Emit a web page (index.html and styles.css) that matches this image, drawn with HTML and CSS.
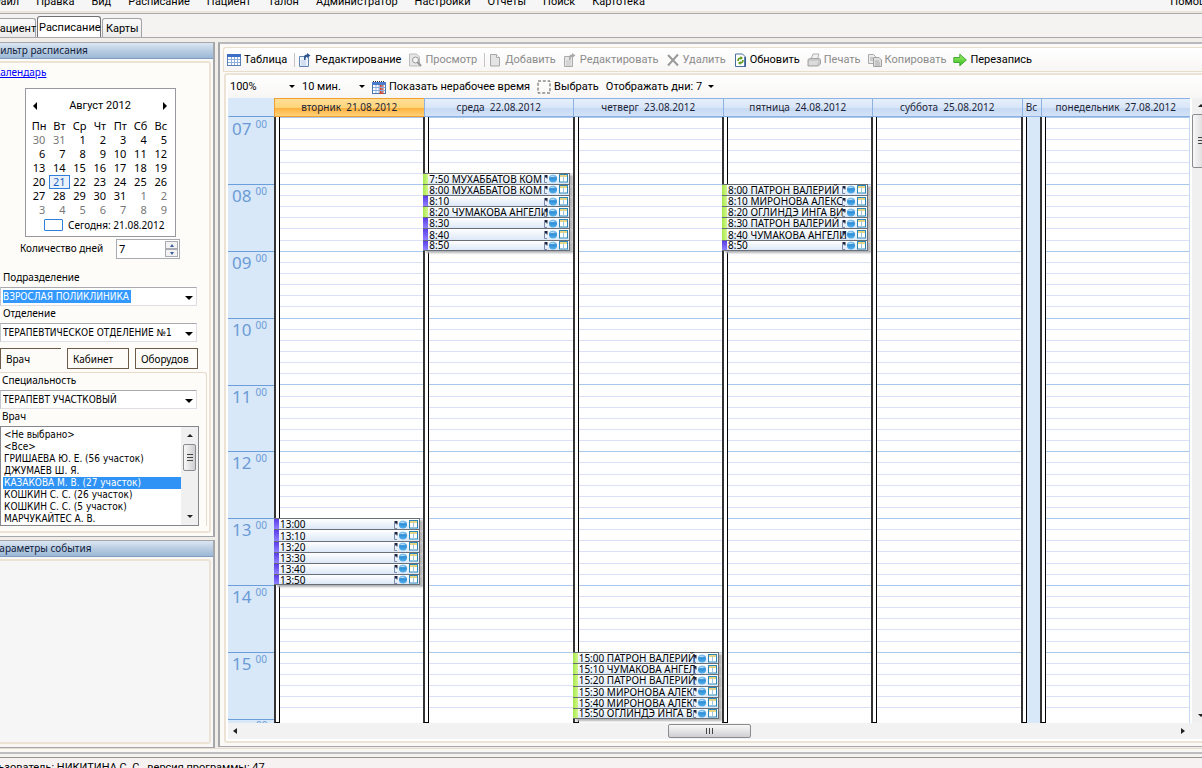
FILE: index.html
```html
<!DOCTYPE html>
<html lang="ru">
<head>
<meta charset="utf-8">
<title>Расписание</title>
<link rel="stylesheet" href="styles.css">
</head>
<body>
<svg class="defs" aria-hidden="true">
  <defs>
    <linearGradient id="blueball" x1="0" y1="0" x2="0" y2="1"><stop offset="0" stop-color="#9fd0f2"/><stop offset=".45" stop-color="#2f8fd8"/><stop offset="1" stop-color="#56b0ea"/></linearGradient>
    <linearGradient id="greenarrow" x1="0" y1="0" x2="0" y2="1"><stop offset="0" stop-color="#a6ee70"/><stop offset="1" stop-color="#2fc01c"/></linearGradient>
    <symbol id="ev-icons" viewBox="0 0 24 9">
      <path d="M0.500 1h3v3.500h-1v-1h-2z" fill="#1c2340"/><path d="M0.500 3v5.500h2.500" stroke="#7d8aa8" fill="none"/>
      <circle cx="9" cy="4.500" r="4" fill="url(#blueball)"/><path d="M6.500 2.500h4" stroke="#b5dcf5"/>
      <rect x="15.500" y=".5" width="8" height="7.500" fill="#fff" stroke="#2b86b8"/><path d="M16 2h7" stroke="#e3c95a" stroke-width="1.500"/><path d="M19.500 2.500v5" stroke="#9cc6dd"/>
    </symbol>
    <symbol id="i-table" viewBox="0 0 14 14">
      <rect x=".5" y="1.500" width="13" height="11" fill="#fff" stroke="#5b7fb8"/><path d="M0 1h14v3H0z" fill="#3c6fc4"/><path d="M1 6.500h12M1 9.500h12M4.500 4v8M7.500 4v8M10.500 4v8" stroke="#8fb0dd"/>
    </symbol>
    <symbol id="i-edit" viewBox="0 0 14 14">
      <path d="M1.500 3.500h9v10h-9z" fill="#edf3fb" stroke="#6484b0"/><path d="M3 8h5M3 10h5M3 12h5" stroke="#b9cbe4"/><path d="M6 7V4q0-2.500 3-2.500V0l3.500 2.500L9 5V3.700q-1.500 0-1.500 3.300z" fill="#2f568f"/>
    </symbol>
    <symbol id="i-editg" viewBox="0 0 14 14">
      <path d="M1.500 3.500h8v10h-8z" fill="#e6e6e6" stroke="#aaa"/><path d="M3 8h5M3 10h5M3 12h5" stroke="#c4c4c4"/><path d="M6 7V4q0-2.500 3-2.500V0l3.500 2.500L9 5V3.700q-1.500 0-1.500 3.300z" fill="#aaa"/>
    </symbol>
    <symbol id="i-view" viewBox="0 0 14 14">
      <path d="M1.500 1h7l3 3v9h-10z" fill="#e6e6e6" stroke="#bbb"/><circle cx="7.500" cy="7" r="3" fill="#f4f4f4" stroke="#999"/><path d="M9.500 9l3.500 4" stroke="#999" stroke-width="2"/>
    </symbol>
    <symbol id="i-add" viewBox="0 0 14 14">
      <path d="M2.500 1.500h6l3 3v8.500h-9z" fill="#e4e4e4" stroke="#a8a8a8"/><path d="M8.500 1.500v3h3" fill="#fff" stroke="#a8a8a8"/>
    </symbol>
    <symbol id="i-del" viewBox="0 0 14 14"><path d="M2 2l10 10.500M12 1.500L2 12.500" stroke="#9b9b9b" stroke-width="2"/></symbol>
    <symbol id="i-refresh" viewBox="0 0 14 14">
      <path d="M2.500 1h7l3 3v9.500h-10z" fill="#fff" stroke="#4a6d9e"/><path d="M12 4v9.500" stroke="#2f568f" stroke-width="1.500"/><path d="M5 8q0-3 3-3M10 7q0 3-3 3" fill="none" stroke="#5b9a16" stroke-width="1.500"/><path d="M7.500 3l2.500 2-2.500 2zM7.500 8L5 10l2.500 2z" fill="#5b9a16"/>
    </symbol>
    <symbol id="i-print" viewBox="0 0 14 14">
      <path d="M4 6l2-5h6l-1.500 5z" fill="#f1f1f1" stroke="#b0b0b0"/><path d="M1 6.500l2-1h9l1.500 1V11L11 13H1z" fill="#c9c9c9" stroke="#a5a5a5"/><path d="M2 9h9M2 11h8" stroke="#eee"/>
    </symbol>
    <symbol id="i-copy" viewBox="0 0 14 14">
      <path d="M.5 1.500h5l2 2v7h-7z" fill="#ececec" stroke="#aaa"/><path d="M5.500 4.500h5.500l2.500 2.500v6.500h-8z" fill="#e0e0e0" stroke="#a0a0a0"/><path d="M7 8h4M7 10h5M7 12h5M2 5h3M2 7h3" stroke="#aaa"/>
    </symbol>
    <symbol id="i-arrow" viewBox="0 0 14 14"><path d="M.8 4.500h6V1.200L13.400 7l-6.600 5.800V9.500h-6z" fill="url(#greenarrow)" stroke="#4aa53a"/></symbol>
    <symbol id="i-time" viewBox="0 0 14 14">
      <rect x=".5" y="2.500" width="13" height="11" fill="#fff" stroke="#4d74b0"/><path d="M0 2h14v3H0z" fill="#4a7cca"/><path d="M1 1.500h12" stroke="#333" stroke-dasharray="1 1"/><path d="M7.500 5h4v9h-4z" fill="#d9442a"/><path d="M1 7.500h12M1 10.500h12M4 5v8M7 5v8M10 5v8" stroke="#8badde"/>
    </symbol>
    <symbol id="i-select" viewBox="0 0 14 14"><rect x="1" y="1" width="12" height="12" fill="none" stroke="#555" stroke-dasharray="3 1.800"/></symbol>
  </defs>
</svg>
<div class="app">
  <nav class="menu">
    <a href="#">Файл</a><a href="#">Правка</a><a href="#">Вид</a><a href="#">Расписание</a><a href="#">Пациент</a><a href="#">Талон</a><a href="#">Администратор</a><a href="#">Настройки</a><a href="#">Отчеты</a><a href="#">Поиск</a><a href="#">Картотека</a><a href="#" class="help">Помощь</a>
  </nav>
  <div class="tabs">
    <button class="tab">Пациент</button><button class="tab current">Расписание</button><button class="tab">Карты</button>
  </div>
  <main class="main">
    <aside class="side">
      <section class="pane">
        <h2 class="pane-title">Фильтр расписания</h2>
        <div class="pane-body filter">
          <a class="callink" href="#">Календарь</a>
          <div class="calendar">
            <div class="cal-head"><button class="prev" aria-label="Назад"></button><span>Август 2012</span><button class="next" aria-label="Вперёд"></button></div>
            <table class="cal-days">
              <thead><tr><th>Пн</th><th>Вт</th><th>Ср</th><th>Чт</th><th>Пт</th><th>Сб</th><th>Вс</th></tr></thead>
              <tbody id="days"></tbody>
            </table>
            <div class="cal-today"><i></i><span>Сегодня: 21.08.2012</span></div>
          </div>
          <div class="count"><label for="cnt">Количество дней</label><div class="spin"><input id="cnt" value="7"><span class="steps"><button class="up" aria-label="Больше"></button><button class="down" aria-label="Меньше"></button></span></div></div>
          <label class="lbl first" for="dep">Подразделение</label>
          <div class="combo"><input id="dep" class="marked" value="ВЗРОСЛАЯ ПОЛИКЛИНИКА"></div>
          <label class="lbl" for="sec">Отделение</label>
          <div class="combo"><select id="sec"><option>ТЕРАПЕВТИЧЕСКОЕ ОТДЕЛЕНИЕ №1</option></select></div>
          <div class="kinds"><button class="kind on">Врач</button><button class="kind">Кабинет</button><button class="kind">Оборудов</button></div>
          <div class="sub">
            <label class="lbl" for="spec">Специальность</label>
            <div class="combo"><select id="spec"><option>ТЕРАПЕВТ УЧАСТКОВЫЙ</option></select></div>
            <label class="lbl" for="doc">Врач</label>
            <div class="listbox">
              <select id="doc" size="8">
                <option>&lt;Не выбрано&gt;</option><option>&lt;Все&gt;</option><option>ГРИШАЕВА Ю. Е. (56 участок)</option><option>ДЖУМАЕВ Ш. Я.</option><option selected>КАЗАКОВА М. В. (27 участок)</option><option>КОШКИН С. С. (26 участок)</option><option>КОШКИН С. С. (5 участок)</option><option>МАРЧУКАЙТЕС А. В.</option>
              </select>
              <div class="vbar"><i class="tri-up"></i><b class="thumb"></b><i class="tri-down"></i></div>
            </div>
          </div>
        </div>
      </section>
      <section class="pane rest">
        <h2 class="pane-title">Параметры события</h2>
        <div class="pane-body empty"></div>
      </section>
    </aside>
    <section class="work">
      <div class="toolbar">
        <button><svg><use href="#i-table"/></svg>Таблица</button><i class="sep"></i>
        <button><svg><use href="#i-edit"/></svg>Редактирование</button>
        <button disabled><svg><use href="#i-view"/></svg>Просмотр</button><i class="sep"></i>
        <button disabled><svg><use href="#i-add"/></svg>Добавить</button>
        <button disabled><svg><use href="#i-editg"/></svg>Редактировать</button>
        <button disabled><svg><use href="#i-del"/></svg>Удалить</button>
        <button><svg><use href="#i-refresh"/></svg>Обновить</button>
        <button disabled><svg><use href="#i-print"/></svg>Печать</button>
        <button disabled><svg><use href="#i-copy"/></svg>Копировать</button>
        <button><svg><use href="#i-arrow"/></svg>Перезапись</button>
      </div>
      <div class="board">
        <div class="toolbar options">
          <div class="drop zoom"><select aria-label="Масштаб"><option>100%</option></select></div>
          <div class="drop step"><select aria-label="Интервал"><option>10 мин.</option></select></div>
          <button><svg><use href="#i-time"/></svg>Показать нерабочее время</button>
          <button><svg><use href="#i-select"/></svg>Выбрать</button>
          <button class="days-menu">Отображать дни: 7<i class="caret"></i></button>
        </div>
        <div class="sched-row">
          <div class="sched">
            <div class="heads"><span class="corner"></span><span class="today">вторник&nbsp; 21.08.2012</span><span>среда&nbsp; 22.08.2012</span><span>четверг&nbsp; 23.08.2012</span><span>пятница&nbsp; 24.08.2012</span><span>суббота&nbsp; 25.08.2012</span><span>Вс</span><span>понедельник&nbsp; 27.08.2012</span></div>
            <div class="body">
              <div class="rail" id="rail"></div>
              <div class="plane">
                <div class="lines" id="lines"></div>
                <div class="cols" id="cols"></div>
              </div>
              <div class="cut"><sup>00</sup></div>
            </div>
          </div>
          <div class="vbar big"><i class="tri-up"></i><b class="thumb"></b><i class="tri-down"></i></div>
        </div>
        <div class="hbar"><i class="tri-left"></i><b class="hthumb"></b><i class="tri-right"></i></div>
      </div>
    </section>
  </main>
  <footer class="status"><span>Пользователь: НИКИТИНА С. С., версия программы: 47</span></footer>
</div>
<script src="app.js"></script>
</body>
</html>
```
FILE: styles.css
```css
* { box-sizing: border-box; }
body { margin: 0; background: #f7f5f3; color: #000; font: 11px/14px Roboto, "Noto Sans", sans-serif; overflow: hidden; }
button, input, select { font: inherit; color: inherit; margin: 0; padding: 0; border: 0; background: none; border-radius: 0; outline: 0; }
.defs { position: absolute; width: 0; height: 0; }
.app { display: flex; flex-direction: column; height: 100vh; margin-left: -8px; overflow: hidden; }

.menu { display: flex; gap: 17px; height: 13px; flex: none; background: #f6f6f6; border-bottom: 2px solid #ece5da; line-height: 4px; overflow: hidden; white-space: nowrap; }
.menu a { color: #000; text-decoration: none; }
.menu .help { margin-left: auto; margin-right: -12px; }

.tabs { display: flex; flex: none; height: 25px; padding-top: 3px; align-items: flex-end; border-top: 1px solid #a9abb0; border-bottom: 1px solid #a9a9ad; background: #f4f3f2; }
.tab { height: 19px; border: 1px solid #a3a3a6; border-bottom: 0; border-radius: 3px 3px 0 0; background: linear-gradient(#fafafa, #ececec); padding: 1px 3px 0; width: 44px; white-space: nowrap; }
.tab:first-child { padding: 1px 0 0; border-left: 0; text-align: left; }
.tab.current { width: 64px; height: 21px; background: #fff; border-color: #707074; padding: 1px 1px 0; margin-left: 1px; }
.tab:last-child { width: 40px; margin-left: 1px; }

.main { flex: 1; min-height: 0; display: flex; gap: 3px; padding: 4px 0 0; background: #f1eeea; }
.side { width: 223px; flex: none; display: flex; flex-direction: column; gap: 3px; font: 10px/14px "Noto Sans", sans-serif; }
.pane { display: flex; flex-direction: column; border: 1px solid #a6a7ab; border-left: 0; border-right-width: 2px; background: #fcfbf8; }
.rest { flex: 1; background: #f8f7f6; }
.pane-title { margin: 0; font-size: 10px; font-weight: 400; line-height: 15px; height: 16px; color: #10203c; background: linear-gradient(#dbe6f2, #b9cde2 50%, #9cb8d6); border-bottom: 1px solid #7f9dc0; }
.pane-body { margin: 2px 2px 3px 0; border: 2px solid #ede3d5; border-left: 0; border-radius: 0 3px 3px 0; background: #fdfcf9; }
.empty { flex: 1; background: #f6f6f6; }
.filter { padding: 0 0 5px 8px; }
.callink { display: block; margin: 2px 0 8px -6px; color: #00f; line-height: 15px; }

.calendar { width: 151px; height: 149px; margin-left: 25px; padding: 9px 4px 0 3px; border: 1px solid #98989e; background: #fff; }
.cal-head { display: flex; justify-content: space-between; align-items: center; padding: 0 4px 0 4px; height: 15px; font-family: Roboto, sans-serif; font-size: 11px; }
.prev, .next { border: 3px solid transparent; border-top-width: 4px; border-bottom-width: 4px; }
.prev { border-right: 4px solid #000; border-left: 0; }
.next { border-left: 4px solid #000; border-right: 0; }
.cal-days { width: 100%; margin-top: 5px; border-collapse: collapse; table-layout: fixed; font-size: 11px; }
.cal-days th { font-weight: 400; padding: 0; height: 15px; text-align: center; }
.cal-days td { height: 14px; padding: 0 4px 0 0; line-height: 12px; text-align: right; }
.cal-days td.out { color: #777; }
.cal-days td.now { color: #1b62c0; outline: 1px solid #2f80dc; outline-offset: -1px; background: #e9f1fb; }
.cal-today { display: flex; align-items: center; gap: 5px; margin-left: 15px; height: 16px; white-space: nowrap; }
.cal-today i { width: 19px; height: 12px; border: 1px solid #2f80dc; border-radius: 1px; background: #fff; }

.count { display: flex; align-items: flex-start; justify-content: space-between; margin: 2px 29px 0 20px; height: 20px; line-height: 19px; }
.spin { display: flex; width: 64px; height: 20px; border: 1px solid #a9abb2; background: #fff; font-size: 11px; }
.spin input { width: 46px; padding-left: 2px; height: 16px; }
.steps { display: flex; flex-direction: column; width: 13px; margin: 1px 1px 1px auto; }
.steps button { flex: 1; border: 1px solid #a9abb2; background: #f2f2f2; display: flex; align-items: center; justify-content: center; }
.steps button::before { content: ""; border: 2px solid transparent; }
.up::before { border-bottom: 3px solid #3c5e9c !important; border-top: 0 !important; }
.down::before { border-top: 3px solid #3c5e9c !important; border-bottom: 0 !important; }

.lbl { display: block; line-height: 14px; padding: 0 0 3px 3px; }
.lbl.first { margin-top: 11px; }
.combo { position: relative; display: flex; align-items: center; width: 197px; height: 19px; border: 1px solid #dedee4; border-top-color: #a8aab0; border-left-color: #c6c7cc; background: #fff; font-family: "DejaVu Sans Condensed", "DejaVu Sans", sans-serif; font-size: 10px; }
.combo::after { content: ""; position: absolute; right: 3px; top: 8px; border: 4px solid transparent; border-top-color: #000; border-bottom: 0; }
.combo select { width: 100%; height: 17px; appearance: none; padding-left: 2px; }
.combo .marked { width: 128px; height: 13px; margin-left: 2px; background: #3399ff; color: #fff; }
.kinds { display: flex; gap: 6px; margin: 6px 0 3px; }
.kind { width: 62px; height: 21px; border: 1px solid #6c5b49; text-align: left; padding-left: 5px; white-space: nowrap; }
.kind.on { width: 61px; border-right: 0; border-bottom: 0; }
.kind:last-child { width: 63px; padding-left: 5px; }
.sub { margin-left: -8px; padding-left: 8px; margin-right: 2px; border: 1px solid #e6dac8; border-left: 0; border-radius: 0 3px 0 0; border-bottom: 0; }
.sub .lbl { padding-left: 2px; }

.listbox { display: flex; width: 199px; height: 100px; border: 1px solid #85878d; background: #fff; font-family: "DejaVu Sans Condensed", "DejaVu Sans", sans-serif; font-size: 10px; }
.listbox select { flex: 1; min-width: 0; overflow: hidden; padding: 2px 0 0 2px; scrollbar-width: none; }
.listbox option { padding: 0 0 0 1px; height: 12px; min-height: 12px; line-height: 12px; color: #000; }
.listbox option:checked { background: linear-gradient(#2e93f5, #2e93f5); color: #fff; }
.vbar { width: 17px; flex: none; display: flex; flex-direction: column; align-items: center; background: #f0f0f0; padding: 7px 0; }
.tri-up, .tri-down { border: 3px solid transparent; }
.tri-up { border-bottom: 3px solid #222; border-top: 0; }
.tri-down { border-top: 3px solid #222; border-bottom: 0; margin-top: auto; }
.thumb { width: 13px; height: 27px; margin-top: 7px; border: 1px solid #8c8c90; border-radius: 2px; background: repeating-linear-gradient(#444 0 1px, transparent 1px 3px) center / 6px 8px no-repeat, linear-gradient(90deg, #f8f8f8, #cfcfd2); }
.big { width: 10px; align-items: flex-start; padding: 6px 0; overflow: hidden; }
.big .tri-up, .big .tri-down { margin-left: 6px; }
.big .thumb { width: 17px; height: 54px; flex: none; }

.work { flex: 1; min-width: 0; display: flex; flex-direction: column; margin-bottom: 1px; padding: 3px 0 3px 3px; border: 1px solid #a6a7ab; border-width: 2px 0 1px 2px; border-top-color: #b9b9bd; background: #fcfaf7; }
.toolbar { display: flex; align-items: center; gap: 7px; height: 25px; flex: none; padding-left: 3px; border: 1px solid #e9ddcb; border-right: 0; border-radius: 3px 0 0 0; background: linear-gradient(#fff, #f8f6f5); white-space: nowrap; }
.toolbar button { display: flex; align-items: center; gap: 3px; }
.toolbar button:disabled { color: #8b8b8b; }
.toolbar svg { width: 14px; height: 14px; flex: none; }
.sep { width: 1px; height: 14px; background: #c5c5c8; margin-right: -4px; }
.board { flex: 1; min-height: 0; display: flex; flex-direction: column; margin: 1px 0 0 1px; padding: 0 0 2px 2px; border: 2px solid #ede3d5; border-right: 0; background: #fff; border-radius: 3px 0 0 3px; }
.options { border: 0; height: 23px; padding-left: 2px; }
.drop { position: relative; }
.drop select { width: 100%; appearance: none; }
.drop::after { content: ""; position: absolute; right: 0; top: 5px; border: 3px solid transparent; border-top-color: #000; border-bottom: 0; }
.zoom { width: 65px; }
.step { width: 63px; }
.caret { border: 3px solid transparent; border-top-color: #000; border-bottom: 0; margin-left: 3px; }

.sched-row { flex: 1; min-height: 0; display: flex; gap: 2px; }
.sched { flex: 1; min-width: 0; display: flex; flex-direction: column; }
.heads { display: grid; grid-template-columns: 46px repeat(5, 1fr) 19px 1fr; height: 19px; flex: none; font: 10px/17px "Noto Sans", sans-serif; text-align: center; white-space: nowrap; }
.heads span { border: 1px solid #8cb2e4; border-right: 0; background: linear-gradient(#e6effb, #d9e6f8 50%, #c5d9f3 51%, #d3e2f7); color: #1c2438; min-width: 0; overflow: hidden; }
.heads .corner { background: #d9e8f8; border-color: transparent transparent #6c9edb; }
.heads .today { background: linear-gradient(#ffdf96, #ffd47a 50%, #fdb03c 52%, #ffd178); border-color: #f0a030; }
.body { flex: 1; min-height: 0; display: grid; grid-template-columns: 46px 1fr; grid-template-rows: 1fr 4px; background: #fff; border-right: 1px solid #c4daf4; font-family: "Noto Sans", sans-serif; }
.rail { display: flex; flex-direction: column; background: #d9e8f8; }
.hour { flex: 1; min-height: 0; display: flex; justify-content: space-between; padding: 0 7px 0 4px; border-top: 1px solid #6c9edb; color: #6b9bd6; font-size: 17px; line-height: 22px; }
.hour sup, .cut sup { font-size: 10px; line-height: 12px; }
.hour:first-child { border-top-color: transparent; }
.cut { padding-left: 28px; border-top: 1px solid #6c9edb; background: #d9e8f8; color: #6b9bd6; overflow: hidden; line-height: 8px; }
.cut sup { vertical-align: top; line-height: 10px; }
.plane { display: grid; min-width: 0; grid-row: 1 / 3; grid-column: 2; grid-template-rows: 1fr 4px; }
.lines { grid-area: 1 / 1; display: flex; flex-direction: column; min-height: 0; }
.lines i { flex: 1; border-top: 1px solid #dcdff8; }
.lines i:nth-child(6n + 1) { border-top-color: #a9c8ec; }
.cols { grid-row: 1 / 3; grid-column: 1; display: grid; grid-template-columns: repeat(5, 1fr) 19px 1fr; min-height: 0; }
.col { min-width: 0; min-height: 0; display: grid; grid-template-rows: repeat(54, minmax(0, 1fr)) 4px; grid-template-columns: 6px minmax(0, 1fr) 3px; }
.gutter { grid-row: 1 / -1; grid-column: 1; border: 1px solid #000; border-top: 0; border-left: 2px solid #333; background: #fff; }
.off { background: #d9e8f8; }
.event { grid-column: 1 / 3; display: flex; align-items: center; border: 1px solid #6a6e78; border-bottom-width: 0; border-left: 0; background: linear-gradient(#fff, #dce8f7); box-shadow: 3px 2px 2px #b4b4b4; line-height: 10px; font-size: 10px; white-space: nowrap; min-width: 0; }
.event::before { content: ""; align-self: stretch; flex: none; width: 5px; background: linear-gradient(#5a3de6, #8f80ff); }
.event.busy::before { background: linear-gradient(90deg, #a5e84c, #d4f78e); }
.event .who { flex: 1; min-width: 0; padding-left: 1px; white-space: pre; }
.event svg { width: 24px; height: 9px; flex: none; margin-right: 1px; }
.event.last { border-bottom-width: 1px; }
.hbar { height: 16px; flex: none; display: grid; grid-template-columns: 440px 83px 1fr; align-items: center; background: #f2f2f2; }
.tri-left, .tri-right { width: 0; border: 3px solid transparent; }
.tri-left { border-right: 4px solid #222; border-left: 0; margin-left: 5px; }
.tri-right { border-left: 4px solid #222; border-right: 0; justify-self: end; margin-right: 17px; }
.hthumb { height: 14px; border: 1px solid #8c8c90; border-radius: 2px; background: repeating-linear-gradient(90deg, #444 0 1px, transparent 1px 3px) center / 8px 6px no-repeat, linear-gradient(#f8f8f8, #cfcfd2); }

.status { flex: none; height: 20px; padding-top: 6px; background: linear-gradient(#e6ddd0 0 1px, #faf8f5 1px 4px, #bdbdbf 4px 6px, #f5f1ef 6px 9px, #96948f 9px 10px, #f6f2f1 10px); line-height: 27px; overflow: hidden; white-space: nowrap; }
.status span { margin-left: -14px; }
```
FILE: app.js
```js
const days = document.getElementById('days');
const first = new Date(2012, 6, 30);
for (let w = 0; w < 6; w++) {
  const tr = days.insertRow();
  for (let d = 0; d < 7; d++) {
    const date = new Date(first.getFullYear(), first.getMonth(), first.getDate() + w * 7 + d);
    const td = tr.insertCell();
    td.textContent = date.getDate();
    if (date.getMonth() !== 7) td.className = 'out';
    else if (date.getDate() === 21) td.className = 'now';
  }
}

const START = 7, HOURS = 9;
const rail = document.getElementById('rail');
for (let h = START; h < START + HOURS; h++) {
  rail.insertAdjacentHTML('beforeend', `<div class="hour">${String(h).padStart(2, '0')}<sup>00</sup></div>`);
}
document.getElementById('lines').innerHTML = '<i></i>'.repeat(HOURS * 6);

const schedule = [
  ['13:00', '13:10', '13:20', '13:30', '13:40', '13:50'],
  ['7:50 МУХАББАТОВ КОМ', '8:00 МУХАББАТОВ КОМ', '8:10', '8:20 ЧУМАКОВА АНГЕЛИ', '8:30', '8:40', '8:50'],
  ['15:00 ПАТРОН ВАЛЕРИЙ', '15:10 ЧУМАКОВА АНГЕЛ', '15:20 ПАТРОН ВАЛЕРИЙ', '15:30 МИРОНОВА АЛЕК', '15:40 МИРОНОВА АЛЕК', '15:50 ОГЛИНДЭ ИНГА В'],
  ['8:00 ПАТРОН ВАЛЕРИЙ', '8:10 МИРОНОВА АЛЕКС', '8:20 ОГЛИНДЭ ИНГА ВИ', '8:30 ПАТРОН ВАЛЕРИЙ', '8:40 ЧУМАКОВА АНГЕЛИ', '8:50'],
  [], null, []
];
const cols = document.getElementById('cols');
for (const list of schedule) {
  const col = document.createElement('div');
  col.className = list ? 'col' : 'col off';
  col.innerHTML = '<div class="gutter"></div>';
  (list || []).forEach((text, i) => {
    const [h, m] = text.split(' ')[0].split(':').map(Number);
    const row = (h - START) * 6 + m / 10 + 1;
    const cls = 'event' + (text.includes(' ') ? ' busy' : '') + (i === list.length - 1 ? ' last' : '');
    col.insertAdjacentHTML('beforeend',
      `<div class="${cls}" style="grid-row:${row}"><span class="who">${text}</span><svg><use href="#ev-icons"/></svg></div>`);
  });
  cols.append(col);
}
```
